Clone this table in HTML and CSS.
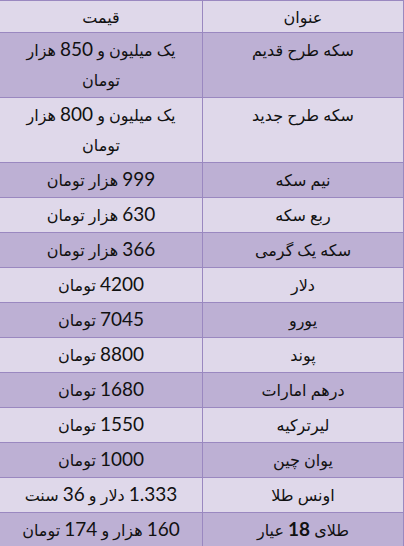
FILE: index.html
```html
<!DOCTYPE html>
<html lang="fa" dir="rtl">
<head>
<meta charset="utf-8">
<title>قیمت سکه و ارز</title>
<link rel="stylesheet" href="styles.css">
</head>
<body>
<table class="prices">
  <colgroup>
    <col class="col-name">
    <col class="col-price">
  </colgroup>
  <thead>
    <tr class="light">
      <th>عنوان</th>
      <th>قیمت</th>
    </tr>
  </thead>
  <tbody>
    <tr class="dark"><td>سکه طرح قدیم</td><td>یک میلیون و <span class="num">850</span> هزار<br>تومان</td></tr>
    <tr class="light"><td>سکه طرح جدید</td><td>یک میلیون و <span class="num">800</span> هزار<br>تومان</td></tr>
    <tr class="dark"><td>نیم سکه</td><td><span class="num">999</span> هزار تومان</td></tr>
    <tr class="light"><td>ربع سکه</td><td><span class="num">630</span> هزار تومان</td></tr>
    <tr class="dark"><td>سکه یک گرمی</td><td><span class="num">366</span> هزار تومان</td></tr>
    <tr class="light"><td>دلار</td><td><span class="num">4200</span> تومان</td></tr>
    <tr class="dark"><td>یورو</td><td><span class="num">7045</span> تومان</td></tr>
    <tr class="light"><td>پوند</td><td><span class="num">8800</span> تومان</td></tr>
    <tr class="dark"><td>درهم امارات</td><td><span class="num">1680</span> تومان</td></tr>
    <tr class="light"><td>لیرترکیه</td><td><span class="num">1550</span> تومان</td></tr>
    <tr class="dark"><td>یوان چین</td><td><span class="num">1000</span> تومان</td></tr>
    <tr class="light"><td>اونس طلا</td><td><span class="num">1.333</span> دلار و <span class="num">36</span> سنت</td></tr>
    <tr class="dark"><td>طلای <b class="num bold">18</b> عیار</td><td><span class="num">160</span> هزار و <span class="num">174</span> تومان</td></tr>
  </tbody>
</table>
</body>
</html>
```
FILE: styles.css
```css
html, body {
  margin: 0;
  padding: 0;
  background: #ffffff;
}

.prices {
  width: 404px;
  border-collapse: collapse;
  table-layout: fixed;
  font-family: Lato, "DejaVu Sans", sans-serif;
  font-size: 16px;
  color: #111111;
  border: 1px solid #9a88c0;
}

.col-name {
  width: 201px;
}

.col-price {
  width: 203px;
}

.prices th,
.prices td {
  border: 1px solid #9a88c0;
  padding: 2px 4px;
  line-height: 30px;
  text-align: center;
  vertical-align: top;
  font-weight: normal;
  white-space: nowrap;
}

.prices th {
  font-size: 16px;
  line-height: 27px;
}

.num {
  font-size: 19px;
  line-height: 1;
}

.bold {
  font-weight: bold;
}

.light {
  background: #dfd8ea;
}

.dark {
  background: #bdb0d4;
}
```
